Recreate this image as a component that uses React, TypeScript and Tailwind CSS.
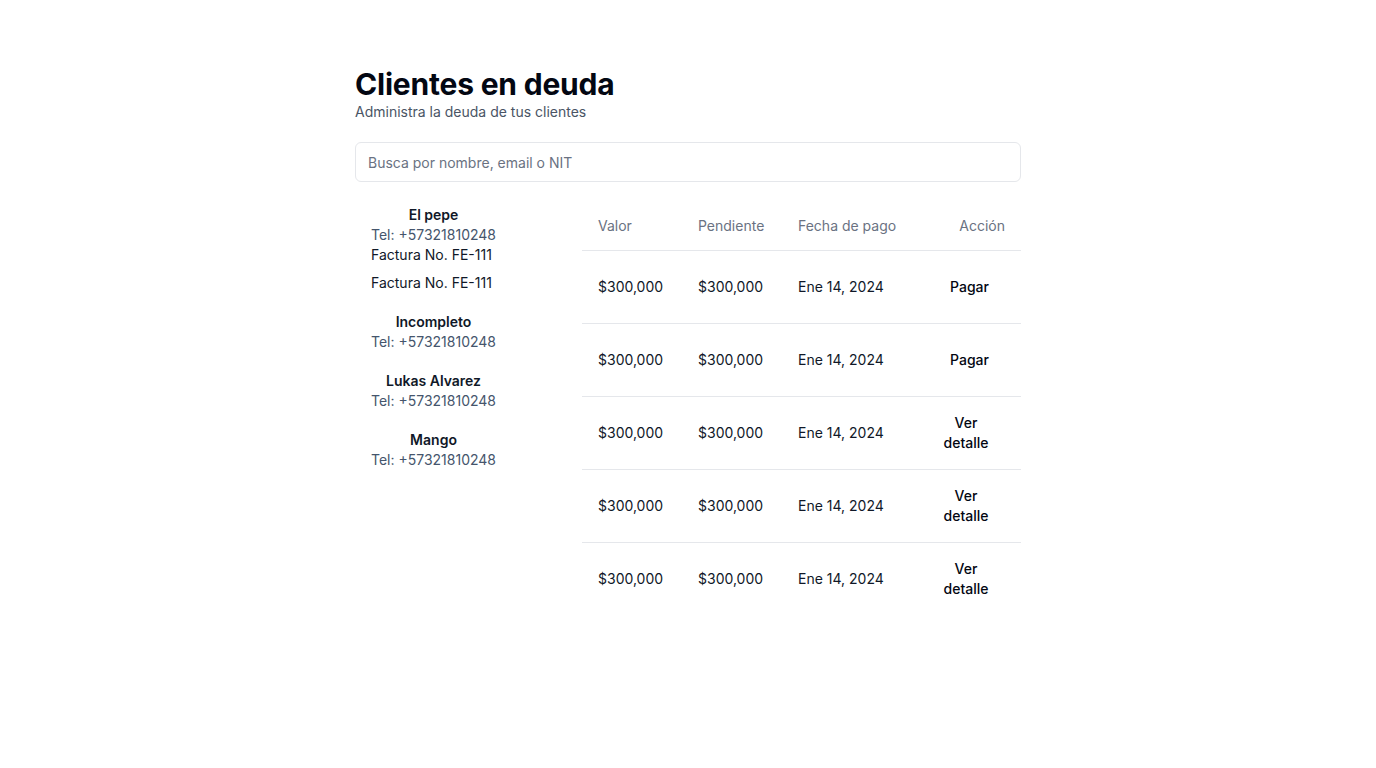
import React from 'react'

type Client = { name: string; tel: string; facturas: string[] }

const clients: Client[] = [
    { name: 'El pepe', tel: '+57321810248', facturas: ['FE-111', 'FE-111'] },
    { name: 'Incompleto', tel: '+57321810248', facturas: [] },
    { name: 'Lukas Alvarez', tel: '+57321810248', facturas: [] },
    { name: 'Mango', tel: '+57321810248', facturas: [] },
]

const rows = [
    { valor: '$300,000', pendiente: '$300,000', fecha: 'Ene 14, 2024', accion: 'Pagar' },
    { valor: '$300,000', pendiente: '$300,000', fecha: 'Ene 14, 2024', accion: 'Pagar' },
    { valor: '$300,000', pendiente: '$300,000', fecha: 'Ene 14, 2024', accion: 'Ver detalle' },
    { valor: '$300,000', pendiente: '$300,000', fecha: 'Ene 14, 2024', accion: 'Ver detalle' },
    { valor: '$300,000', pendiente: '$300,000', fecha: 'Ene 14, 2024', accion: 'Ver detalle' },
]

// Client list item
function ClientItem({ client, first }: { client: Client; first: boolean }) {
    return (
        <div className={first ? 'px-4' : 'px-4 mt-[19px]'}>
            <div className="inline-flex flex-col items-center">
                <span className="font-semibold text-gray-900">{client.name}</span>
                <span className="text-slate-600">Tel: {client.tel}</span>
            </div>
            {client.facturas.map((f, i) => (
                <div key={i} className={i === 0 ? 'text-gray-900' : 'text-gray-900 mt-2'}>
                    Factura No. {f}
                </div>
            ))}
        </div>
    )
}

export default function App() {
    return (
        <div
            className="min-h-screen bg-white text-gray-900"
            style={{ fontFamily: 'Inter, "Noto Sans", sans-serif' }}
        >
            <div className="w-[666px] mx-auto pt-[66px]">
                <h1 className="text-3xl leading-9 font-bold tracking-[-0.2px] text-gray-950">Clientes en deuda</h1>
                <p className="text-sm text-gray-600">Administra la deuda de tus clientes</p>

                <div className="mt-5">
                    <input
                        type="text"
                        placeholder="Busca por nombre, email o NIT"
                        className="w-full h-10 rounded-md border border-gray-200 px-3 text-sm placeholder:text-gray-500 outline-none"
                    />
                </div>

                <div className="mt-5 flex">
                    {/* Clients */}
                    <div className="w-[227px] pt-[3px] text-sm leading-5">
                        {clients.map((c, i) => (
                            <ClientItem key={i} client={c} first={i === 0} />
                        ))}
                    </div>

                    {/* Debts table */}
                    <div className="flex-1">
                        <table className="w-full table-fixed text-sm">
                            <colgroup>
                                <col className="w-[100px]" />
                                <col className="w-[100px]" />
                                <col className="w-[140px]" />
                                <col />
                            </colgroup>
                            <thead>
                                <tr className="border-b border-gray-200">
                                    <th className="h-12 px-4 text-left font-normal text-gray-500 whitespace-nowrap">Valor</th>
                                    <th className="h-12 px-4 text-left font-normal text-gray-500 whitespace-nowrap">Pendiente</th>
                                    <th className="h-12 px-4 text-left font-normal text-gray-500 whitespace-nowrap">Fecha de pago</th>
                                    <th className="h-12 pl-0 pr-4 text-right font-normal text-gray-500">Acción</th>
                                </tr>
                            </thead>
                            <tbody>
                                {rows.map((r, i) => (
                                    <tr key={i} className={i < rows.length - 1 ? 'border-b border-gray-200' : ''}>
                                        <td className="h-[73px] px-4 align-middle">{r.valor}</td>
                                        <td className="h-[73px] px-4 align-middle">{r.pendiente}</td>
                                        <td className="h-[73px] px-4 align-middle">{r.fecha}</td>
                                        <td className="h-[73px] pl-0 pr-4 align-middle text-right">
                                            <button className="inline-block max-w-[78px] px-4 text-center font-medium text-gray-950">
                                                {r.accion}
                                            </button>
                                        </td>
                                    </tr>
                                ))}
                            </tbody>
                        </table>
                    </div>
                </div>
            </div>
        </div>
    )
}
